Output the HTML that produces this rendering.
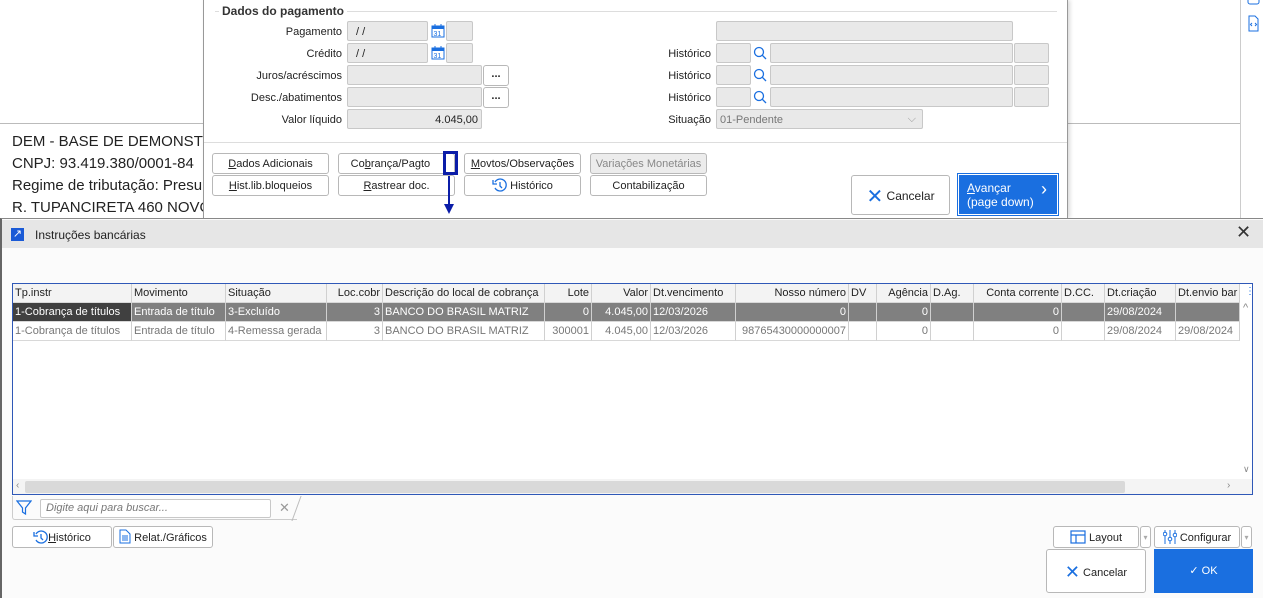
<!DOCTYPE html>
<html><head><meta charset="utf-8"><style>
*{box-sizing:border-box;margin:0;padding:0}
body{width:1263px;height:598px;overflow:hidden;background:#fff;font-family:"Liberation Sans",sans-serif;font-size:11px;color:#222;position:relative}
.a{position:absolute}
.inp{position:absolute;background:#e9e9e9;border:1px solid #c8c8c8;border-radius:2px;height:20px}
.lbl{position:absolute;text-align:right;width:140px;line-height:23px}
.btn{position:absolute;background:#fff;border:1px solid #b8b8b8;border-radius:3px;height:21px;text-align:center;line-height:21px;font-size:11px}
.grid{position:absolute;left:12px;top:283px;width:1241px;height:212px;border:1px solid #2f58b7;background:#fff}
.row{position:absolute;left:0;height:19px;width:1227px}
.c{position:absolute;top:0;height:19px;line-height:19px;padding:0 2px;white-space:nowrap;overflow:hidden;border-right:1px solid #d0d0d0;border-bottom:1px solid #d8d8d8}
.r{text-align:right}
</style></head><body>
<div class="a" style="left:0;top:0;width:1263px;height:598px;background:#fff"></div>
<div class="a" style="left:0;top:123px;width:1240px;height:1px;background:#bbb"></div>
<div class="a" style="left:1240px;top:0;width:1px;height:218px;background:#ccc"></div>
<div class="a" style="left:12px;top:131px;font-size:15px;line-height:22px;color:#222">DEM - BASE DE DEMONSTRAÇÃO<br>CNPJ: 93.419.380/0001-84<br>Regime de tributação: Presumido<br>R. TUPANCIRETA 460 NOVO</div>
<svg class="a" style="left:1247px;top:0" width="14" height="34"><rect x="1" y="-6" width="11" height="10" rx="2" fill="none" stroke="#1a6fe0"/><path d="M2 16h6l3 3v12H2z" fill="none" stroke="#1a6fe0"/><path d="M5 23l-1.5 1.5L5 26M8 23l1.5 1.5L8 26" stroke="#1a6fe0" fill="none"/></svg>
<div class="a" style="left:203px;top:0;width:865px;height:218px;background:#fff;border-left:1px solid #999;border-right:1px solid #999;box-shadow:2px 0 4px rgba(0,0,0,.15)"></div>
<div class="a" style="left:215px;top:11px;width:842px;height:1px;background:#ddd"></div>
<div class="a" style="left:219px;top:4px;background:#fff;padding:0 3px;font-weight:bold;font-size:12px;color:#333">Dados do pagamento</div>
<div class="lbl" style="left:202px;top:21px">Pagamento</div>
<div class="inp" style="left:347px;top:21px;width:81px;padding-left:8px;line-height:20px">/ /</div>
<svg class="a" style="left:431px;top:23px" width="14" height="15"><rect x="1" y="3" width="12" height="11" fill="#fff" stroke="#1a6fe0"/><rect x="1" y="3" width="12" height="3" fill="#1a6fe0"/><path d="M4 1v3M10 1v3" stroke="#1a6fe0"/><text x="2.5" y="13" font-size="7" fill="#1a6fe0" font-family="Liberation Sans">31</text></svg>
<div class="inp" style="left:446px;top:21px;width:27px"></div>
<div class="lbl" style="left:202px;top:43px">Crédito</div>
<div class="inp" style="left:347px;top:43px;width:81px;padding-left:8px;line-height:20px">/ /</div>
<svg class="a" style="left:431px;top:45px" width="14" height="15"><rect x="1" y="3" width="12" height="11" fill="#fff" stroke="#1a6fe0"/><rect x="1" y="3" width="12" height="3" fill="#1a6fe0"/><path d="M4 1v3M10 1v3" stroke="#1a6fe0"/><text x="2.5" y="13" font-size="7" fill="#1a6fe0" font-family="Liberation Sans">31</text></svg>
<div class="inp" style="left:446px;top:43px;width:27px"></div>
<div class="lbl" style="left:202px;top:65px">Juros/acréscimos</div>
<div class="inp" style="left:347px;top:65px;width:135px"></div>
<div class="btn" style="left:483px;top:65px;width:26px;font-weight:bold;line-height:16px">...</div>
<div class="lbl" style="left:202px;top:87px">Desc./abatimentos</div>
<div class="inp" style="left:347px;top:87px;width:135px"></div>
<div class="btn" style="left:483px;top:87px;width:26px;font-weight:bold;line-height:16px">...</div>
<div class="lbl" style="left:202px;top:109px">Valor líquido</div>
<div class="inp" style="left:347px;top:109px;width:135px;text-align:right;padding-right:3px;line-height:20px">4.045,00</div>
<div class="inp" style="left:716px;top:21px;width:297px"></div>
<div class="lbl" style="left:571px;top:43px">Histórico</div><div class="inp" style="left:716px;top:43px;width:35px"></div><div class="inp" style="left:770px;top:43px;width:243px"></div><div class="inp" style="left:1014px;top:43px;width:35px"></div>
<div class="lbl" style="left:571px;top:65px">Histórico</div><div class="inp" style="left:716px;top:65px;width:35px"></div><div class="inp" style="left:770px;top:65px;width:243px"></div><div class="inp" style="left:1014px;top:65px;width:35px"></div>
<div class="lbl" style="left:571px;top:87px">Histórico</div><div class="inp" style="left:716px;top:87px;width:35px"></div><div class="inp" style="left:770px;top:87px;width:243px"></div><div class="inp" style="left:1014px;top:87px;width:35px"></div>
<svg class="a" style="left:753px;top:46px" width="15" height="60"><g fill="none" stroke="#1a6fe0" stroke-width="1.3"><circle cx="6" cy="6" r="4.5"/><path d="M9 9l4 4"/><circle cx="6" cy="28" r="4.5"/><path d="M9 31l4 4"/><circle cx="6" cy="50" r="4.5"/><path d="M9 53l4 4"/></g></svg>
<div class="lbl" style="left:571px;top:109px">Situação</div>
<div class="inp" style="left:716px;top:109px;width:207px;padding-left:3px;line-height:20px;color:#777">01-Pendente<span style="position:absolute;right:6px;top:-1px;color:#999">⌵</span></div>
<div class="a" style="left:204px;top:142px;width:863px;height:1px;background:#ddd"></div>
<div class="btn" style="left:212px;top:153px;width:117px"><u>D</u>ados Adicionais</div>
<div class="btn" style="left:338px;top:153px;width:117px">Co<u>b</u>rança/Pagto&nbsp;&nbsp;&nbsp;&nbsp;</div>
<div class="a" style="left:443px;top:151px;width:15px;height:24px;border:3px solid #0b1da8"></div>
<div class="btn" style="left:464px;top:153px;width:117px"><u>M</u>ovtos/Observações</div>
<div class="btn" style="left:590px;top:153px;width:117px;background:#ececec;color:#888">Variações Monetárias</div>
<div class="btn" style="left:212px;top:175px;width:117px"><u>H</u>ist.lib.bloqueios</div>
<div class="btn" style="left:338px;top:175px;width:117px"><u>R</u>astrear doc.</div>
<div class="btn" style="left:464px;top:175px;width:117px"><svg width="15" height="14" style="vertical-align:-3px"><path d="M3 4A6 6 0 1 1 3 10" fill="none" stroke="#1a6fe0" stroke-width="1.3"/><path d="M1 2v4h4" fill="none" stroke="#1a6fe0" stroke-width="1.3"/><path d="M8 4v4l2 2" fill="none" stroke="#1a6fe0" stroke-width="1.3"/></svg> Histórico</div>
<div class="btn" style="left:590px;top:175px;width:117px">Contabilização</div>
<div class="a" style="left:448px;top:176px;width:2px;height:32px;background:#0b1da8"></div>
<div class="a" style="left:444px;top:204px;width:0;height:0;border-left:5px solid transparent;border-right:5px solid transparent;border-top:10px solid #0b1da8"></div>
<div class="btn" style="left:851px;top:175px;width:99px;height:40px;line-height:40px;font-size:12px"><span style="color:#1a6fe0;font-size:20px;vertical-align:-3px">✕</span> Cancelar</div>
<div class="a" style="left:957px;top:173px;width:102px;height:43px;border:1px solid #1a6fe0"></div>
<div class="a" style="left:959px;top:175px;width:98px;height:39px;background:#1a6fe0;color:#fff;font-size:12px;line-height:14px;padding:6px 0 0 8px"><u>A</u>vançar<br>(page down)<span style="position:absolute;right:10px;top:7px;font-size:18px">›</span></div>
<div class="a" style="left:0;top:218px;width:1263px;height:380px;background:#fbfbfb;border-top:1px solid #888;border-left:2px solid #666"></div>
<div class="a" style="left:2px;top:220px;width:1261px;height:28px;background:#e6e6e6"></div>
<div class="a" style="left:11px;top:228px;width:13px;height:13px;background:#1a5ad6;color:#fff;font-size:11px;line-height:12px;text-align:center">↗</div>
<div class="a" style="left:35px;top:228px;font-size:12px">Instruções bancárias</div>
<div class="a" style="left:1236px;top:222px;font-size:18px;color:#333">✕</div>
<div class="grid">
 <div class="row" style="top:0;background:#f3f3f3">
  <div class="c" style="left:0;width:119px">Tp.instr</div><div class="c" style="left:119px;width:94px">Movimento</div><div class="c" style="left:213px;width:101px">Situação</div><div class="c r" style="left:314px;width:56px">Loc.cobr</div><div class="c" style="left:370px;width:162px">Descrição do local de cobrança</div><div class="c r" style="left:532px;width:47px">Lote</div><div class="c r" style="left:579px;width:59px">Valor</div><div class="c" style="left:638px;width:85px">Dt.vencimento</div><div class="c r" style="left:723px;width:113px">Nosso número</div><div class="c" style="left:836px;width:28px">DV</div><div class="c r" style="left:864px;width:54px">Agência</div><div class="c" style="left:918px;width:43px">D.Ag.</div><div class="c r" style="left:961px;width:88px">Conta corrente</div><div class="c" style="left:1049px;width:43px">D.CC.</div><div class="c" style="left:1092px;width:71px">Dt.criação</div><div class="c" style="left:1163px;width:64px">Dt.envio bar</div>
 </div>
 <div class="row" style="top:19px;background:#808080;color:#fff">
  <div class="c" style="left:0;width:119px;background:#404040">1-Cobrança de títulos</div><div class="c" style="left:119px;width:94px">Entrada de título</div><div class="c" style="left:213px;width:101px">3-Excluído</div><div class="c r" style="left:314px;width:56px">3</div><div class="c" style="left:370px;width:162px">BANCO DO BRASIL MATRIZ</div><div class="c r" style="left:532px;width:47px">0</div><div class="c r" style="left:579px;width:59px">4.045,00</div><div class="c" style="left:638px;width:85px">12/03/2026</div><div class="c r" style="left:723px;width:113px">0</div><div class="c" style="left:836px;width:28px"></div><div class="c r" style="left:864px;width:54px">0</div><div class="c" style="left:918px;width:43px"></div><div class="c r" style="left:961px;width:88px">0</div><div class="c" style="left:1049px;width:43px"></div><div class="c" style="left:1092px;width:71px">29/08/2024</div><div class="c" style="left:1163px;width:64px"></div>
 </div>
 <div class="row" style="top:38px;color:#777">
  <div class="c" style="left:0;width:119px">1-Cobrança de títulos</div><div class="c" style="left:119px;width:94px">Entrada de título</div><div class="c" style="left:213px;width:101px">4-Remessa gerada</div><div class="c r" style="left:314px;width:56px">3</div><div class="c" style="left:370px;width:162px">BANCO DO BRASIL MATRIZ</div><div class="c r" style="left:532px;width:47px">300001</div><div class="c r" style="left:579px;width:59px">4.045,00</div><div class="c" style="left:638px;width:85px">12/03/2026</div><div class="c r" style="left:723px;width:113px">98765430000000007</div><div class="c" style="left:836px;width:28px"></div><div class="c r" style="left:864px;width:54px">0</div><div class="c" style="left:918px;width:43px"></div><div class="c r" style="left:961px;width:88px">0</div><div class="c" style="left:1049px;width:43px"></div><div class="c" style="left:1092px;width:71px">29/08/2024</div><div class="c" style="left:1163px;width:64px">29/08/2024</div>
 </div>
 <div class="a" style="left:1232px;top:2px;color:#1a6fe0;font-size:10px">⋮</div>
 <div class="a" style="left:1230px;top:18px;color:#888">^</div>
 <div class="a" style="left:1230px;top:180px;color:#888;font-size:9px">∨</div>
 <div class="a" style="left:0;top:195px;width:1239px;height:15px;background:#f4f4f4"></div>
 <div class="a" style="left:12px;top:197px;width:1100px;height:12px;background:#d9d9d9;border-radius:2px"></div>
 <div class="a" style="left:3px;top:196px;color:#888;font-size:10px">‹</div>
 <div class="a" style="left:1214px;top:196px;color:#888;font-size:10px">›</div>
</div>
<div class="a" style="left:12px;top:496px;width:285px;height:24px;border:1px solid #ccc;border-top:none;border-right:none;border-radius:0 0 0 3px"></div>
<svg class="a" style="left:16px;top:500px" width="16" height="16"><path d="M1 1h14l-5.5 7v6l-3-2V8z" fill="none" stroke="#1a6fe0" stroke-width="1.2"/></svg>
<div class="a" style="left:40px;top:499px;width:231px;height:19px;border:1px solid #c8c8c8;border-radius:2px;background:#fff;font-style:italic;color:#777;padding-left:5px;line-height:17px">Digite aqui para buscar...</div>
<div class="a" style="left:279px;top:500px;color:#999;font-size:13px">✕</div>
<div class="a" style="left:296px;top:496px;width:1px;height:25px;background:#bbb;transform:skewX(-20deg)"></div>
<div class="btn" style="left:12px;top:526px;width:100px;height:22px;line-height:22px"><svg width="15" height="14" style="vertical-align:-3px"><path d="M3 4A6 6 0 1 1 3 10" fill="none" stroke="#1a6fe0" stroke-width="1.3"/><path d="M1 2v4h4" fill="none" stroke="#1a6fe0" stroke-width="1.3"/><path d="M8 4v4l2 2" fill="none" stroke="#1a6fe0" stroke-width="1.3"/></svg><u>H</u>istórico</div>
<div class="btn" style="left:113px;top:526px;width:100px;height:22px;line-height:22px"><svg width="12" height="15" style="vertical-align:-3px"><path d="M1 1h6l4 4v9H1z" fill="none" stroke="#1a6fe0"/><path d="M3 7h6M3 9h6M3 11h6" stroke="#1a6fe0"/></svg> Relat./Gráficos</div>
<div class="btn" style="left:1053px;top:526px;width:86px;height:22px;line-height:22px"><svg width="16" height="14" style="vertical-align:-3px"><rect x="1" y="1" width="14" height="12" fill="none" stroke="#1a6fe0" stroke-width="1.2"/><path d="M1 5h14M6 5v8" stroke="#1a6fe0" stroke-width="1.2"/></svg> Layout</div>
<div class="btn" style="left:1140px;top:526px;width:11px;height:22px;color:#aaa;font-size:8px">▾</div>
<div class="btn" style="left:1154px;top:526px;width:86px;height:22px;line-height:22px"><svg width="14" height="14" style="vertical-align:-3px"><path d="M2 0v14M7 0v14M12 0v14" stroke="#1a6fe0"/><circle cx="2" cy="4" r="1.8" fill="#fff" stroke="#1a6fe0"/><circle cx="7" cy="9" r="1.8" fill="#fff" stroke="#1a6fe0"/><circle cx="12" cy="5" r="1.8" fill="#fff" stroke="#1a6fe0"/></svg> Configurar</div>
<div class="btn" style="left:1241px;top:526px;width:11px;height:22px;color:#aaa;font-size:8px">▾</div>
<div class="btn" style="left:1046px;top:549px;width:100px;height:44px;line-height:44px;font-size:11px"><span style="color:#1a6fe0;font-size:18px;vertical-align:-2px">✕</span> Cancelar</div>
<div class="a" style="left:1154px;top:549px;width:99px;height:44px;background:#1a6fe0;color:#fff;text-align:center;line-height:44px">✓ OK</div>
</body></html>
